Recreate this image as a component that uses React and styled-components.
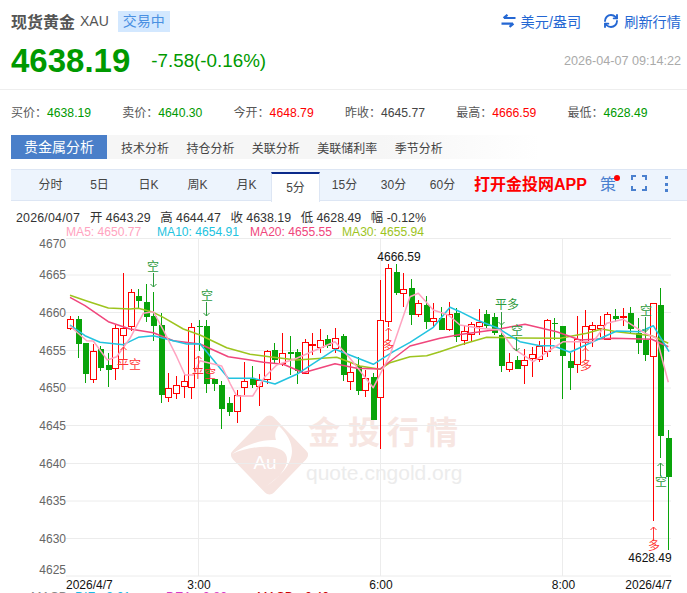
import React from 'react';
import styled, { createGlobalStyle } from 'styled-components';
import { RefreshCw } from 'lucide-react';

const GlobalStyle = createGlobalStyle`
  html, body {
    margin: 0;
    padding: 0;
    width: 687px;
    height: 593px;
    overflow: hidden;
    background: #fff;
    font-family: "Liberation Sans", "Noto Sans CJK SC", sans-serif;
  }
`;

const Page = styled.div`
  width: 687px;
  height: 593px;
  overflow: hidden;
`;

const TopRow = styled.div`
  height: 44px;
  box-sizing: border-box;
  display: flex;
  align-items: center;
  padding: 0 6px 2px 11px;
`;

const Name = styled.span`
  font-size: 16px;
  font-weight: 700;
  color: #555;
`;

const Code = styled.span`
  font-size: 14px;
  color: #555;
  margin-left: 5px;
`;

const Badge = styled.span`
  font-size: 14px;
  line-height: 21px;
  padding: 0 5px;
  margin-left: 9px;
  color: #4a90e2;
  background: #d3e8ff;
`;

const Actions = styled.div`
  margin-left: auto;
  display: flex;
  gap: 22px;
`;

const Action = styled.span`
  display: flex;
  align-items: center;
  gap: 5px;
  font-size: 14.2px;
  color: #2467d3;
`;

const PriceRow = styled.div`
  height: 46px;
  display: flex;
  align-items: center;
  padding: 0 6px 12px 11px;
  box-sizing: border-box;
  border-bottom: 1px solid #eee;
`;

const Price = styled.span`
  font-size: 33px;
  font-weight: 700;
  color: #090;
`;

const Change = styled.span`
  font-size: 18.8px;
  color: #090;
  margin-left: 21px;
`;

const Stamp = styled.span`
  margin-left: auto;
  font-size: 12.6px;
  color: #aaa;
`;

const Stats = styled.div`
  height: 45px;
  box-sizing: border-box;
  display: grid;
  grid-template-columns: repeat(6, 111.3px);
  align-items: center;
  padding: 0 0 2px 11px;
`;

const Stat = styled.span`
  font-size: 12px;
  color: #555;
  white-space: nowrap;
`;

const StatValue = styled.span`
  color: ${props => props.color};
  font-size: 12.2px;
`;

const Tabs = styled.div`
  height: 24px;
  margin-left: 11px;
  width: 529px;
  display: flex;
  align-items: center;
  gap: 17.4px;
  background: linear-gradient(to right, #f6f6f6 70%, #fff);
`;

const MainTab = styled.span`
  width: 96px;
  height: 24px;
  line-height: 24px;
  text-align: center;
  font-size: 14px;
  color: #fff;
  background: #4a7fc9;
  margin-right: -3.4px;
`;

const Tab = styled.span`
  font-size: 12px;
  color: #444;
`;

const Periods = styled.div`
  height: 32px;
  margin: 10px 0 0 11px;
  box-sizing: border-box;
  display: flex;
  padding: 2px 0 0 15px;
  background: #edf4fd;
  border-top: 1px solid #dde6f4;
  border-bottom: 1px solid #dde6f4;
  position: relative;
`;

const Period = styled.span`
  width: 49px;
  box-sizing: border-box;
  text-align: center;
  font-size: 12px;
  line-height: 26px;
  color: #444;
  ${props => props.active && `
    background: #fff;
    border-top: 2px solid #0b2a8a;
    border-left: 1px solid #dde6f4;
    border-right: 1px solid #dde6f4;
    line-height: 28px;
    height: 30px;
  `}
`;

const AppLink = styled.span`
  font-size: 16px;
  font-weight: 700;
  line-height: 26px;
  color: #f00;
  margin-left: 7px;
  white-space: nowrap;
`;

const Strategy = styled.span`
  font-size: 16px;
  line-height: 26px;
  color: #4a80cf;
  margin-left: 13px;
  position: relative;
`;

const RedDot = styled.i`
  position: absolute;
  top: 3px;
  right: -4px;
  width: 6px;
  height: 6px;
  border-radius: 50%;
  background: #f00;
`;

const FullScreen = styled.svg`
  margin: 3px 0 0 15px;
`;

const MoreDots = styled.div`
  margin: 4px 0 0 18px;
  display: flex;
  flex-direction: column;
  gap: 3.5px;
`;

const MoreDot = styled.i`
  width: 3px;
  height: 3px;
  background: #4a80cf;
`;

const InfoRow = styled.div`
  height: 25px;
  padding: 4px 0 0 16px;
  box-sizing: border-box;
  display: flex;
  align-items: flex-end;
  gap: 9.6px;
  font-size: 12.4px;
  line-height: 16px;
  color: #333;
  white-space: nowrap;
`;

const InfoDate = styled.span`
  width: 64.4px;
  letter-spacing: 0.2px;
`;

const MaRow = styled.div`
  height: 12px;
  padding-left: 66px;
  display: grid;
  grid-template-columns: 91px 93px 92px auto;
  font-size: 12.1px;
  line-height: 12px;
`;

const MaValue = styled.span`
  color: ${props => props.color};
`;

const ChartSvg = styled.svg`
  display: block;
`;

const GridLine = styled.line`
  stroke: #ececec;
  stroke-width: 1;
`;

const AxisText = styled.text`
  font-size: 12px;
  fill: #666;
  text-anchor: end;
`;

const DateText = styled.text`
  font-size: 12px;
  fill: #111;
  text-anchor: ${props => props.anchor};
`;

const Curve = styled.polyline`
  fill: none;
  stroke: ${props => props.color};
  stroke-width: 1.5;
  stroke-linejoin: round;
`;

const MarkText = styled.text`
  font-size: 12px;
  text-anchor: middle;
  fill: ${props => (props.red ? '#f33' : '#2c9a3c')};
`;

const MarkArrow = styled.path`
  fill: none;
  stroke: ${props => (props.red ? '#f33' : '#2c9a3c')};
  stroke-width: 1;
`;

const WaterMark = styled.text`
  font-size: 32px;
  font-weight: 700;
  fill: #f7e6e2;
  text-anchor: middle;
`;

const WaterUrl = styled.text`
  font-size: 21px;
  fill: #ececec;
`;

const WaterAu = styled.text`
  font-size: 19px;
  fill: #fff;
  text-anchor: middle;
`;

const MacdRow = styled.div`
  display: flex;
  font-size: 12.5px;
  line-height: 14px;
  padding-left: 31px;
`;

const MacdItem = styled.span`
  color: ${props => props.color};
  width: ${props => props.w}px;
  white-space: nowrap;
`;

const GREEN = '#09a40a';
const RED = '#f00';

const stats = [
  ['买价：', '4638.19', '#090'],
  ['卖价：', '4640.30', '#090'],
  ['今开：', '4648.79', '#f00'],
  ['昨收：', '4645.77', '#444'],
  ['最高：', '4666.59', '#f00'],
  ['最低：', '4628.49', '#090'],
];

const tabs = ['技术分析', '持仓分析', '关联分析', '美联储利率', '季节分析'];
const periods = ['分时', '5日', '日K', '周K', '月K', '5分', '15分', '30分', '60分'];
const quote = ['开 4643.29', '高 4644.47', '收 4638.19', '低 4628.49', '幅 -0.12%'];

// [wick top, body top, body bottom, wick bottom, colour], in page pixels
const candles = [
  [316, 319, 328, 330, 'r'], [316, 319, 344, 358, 'g'], [343, 343, 374, 383, 'g'], [344, 351, 379, 383, 'r'],
  [346, 349, 368, 371, 'g'], [353, 365, 370, 387, 'g'], [325, 328, 368, 380, 'r'], [273, 328, 335, 350, 'r'],
  [289, 292, 326, 331, 'r'], [289, 296, 301, 309, 'g'], [284, 302, 317, 322, 'g'], [292, 316, 326, 341, 'g'],
  [313, 325, 395, 403, 'g'], [373, 388, 397, 402, 'r'], [376, 385, 393, 399, 'r'], [375, 381, 386, 398, 'r'],
  [323, 327, 387, 399, 'r'], [320, 326, 327, 351, 'g'], [320, 326, 384, 393, 'g'], [379, 379, 384, 391, 'g'],
  [381, 385, 409, 429, 'g'], [397, 403, 412, 416, 'g'], [390, 395, 411, 423, 'r'], [362, 381, 387, 395, 'r'],
  [366, 379, 385, 388, 'g'], [374, 380, 386, 406, 'r'], [350, 351, 379, 384, 'r'], [343, 350, 360, 364, 'g'],
  [333, 353, 363, 366, 'r'], [336, 352, 354, 375, 'g'], [349, 352, 371, 384, 'g'], [339, 342, 373, 374, 'r'],
  [333, 344, 345, 355, 'r'], [329, 340, 347, 353, 'r'], [335, 339, 346, 348, 'g'], [328, 338, 348, 353, 'r'],
  [334, 336, 375, 381, 'g'], [363, 372, 381, 390, 'r'], [357, 366, 391, 395, 'g'], [370, 378, 390, 397, 'r'],
  [373, 377, 420, 420, 'g'], [280, 320, 397, 449, 'r'], [264, 268, 321, 327, 'r'], [264, 272, 293, 295, 'g'],
  [273, 289, 293, 307, 'r'], [279, 288, 315, 325, 'g'], [300, 303, 314, 317, 'r'], [296, 305, 322, 329, 'g'],
  [303, 318, 321, 327, 'r'], [307, 318, 330, 330, 'g'], [302, 314, 329, 331, 'r'], [308, 313, 337, 342, 'g'],
  [325, 331, 340, 345, 'r'], [322, 324, 334, 341, 'r'], [309, 322, 326, 335, 'r'], [310, 314, 326, 328, 'g'],
  [313, 317, 333, 335, 'g'], [323, 335, 366, 372, 'g'], [353, 362, 369, 372, 'r'], [356, 360, 369, 369, 'g'],
  [349, 360, 365, 384, 'r'], [347, 354, 358, 377, 'r'], [341, 346, 359, 362, 'r'], [319, 320, 351, 357, 'r'],
  [318, 323, 324, 340, 'g'], [326, 326, 356, 399, 'g'], [353, 361, 368, 390, 'g'], [316, 339, 364, 373, 'r'],
  [310, 326, 342, 352, 'r'], [322, 325, 329, 347, 'r'], [316, 325, 328, 337, 'r'], [312, 314, 339, 339, 'r'],
  [309, 316, 319, 322, 'g'], [308, 316, 317, 326, 'r'], [307, 313, 329, 333, 'g'], [318, 333, 343, 354, 'g'],
  [323, 340, 355, 361, 'g'], [303, 303, 356, 521, 'r'], [288, 305, 436, 458, 'g'], [430, 438, 477, 550, 'g'],
];

const ma5 = '70,326 86.7,340.7 93.3,341 107.3,360 116.7,356.7 130,338.3 143.3,313.3 153.3,311.7 163.3,330 176.7,356.7 185,375 193.3,375 200,360.7 221.7,366 230,383.3 236.7,396 252.7,396 265,376.7 276.7,365 296.7,358.3 335,341.7 350,358.3 373.3,387.7 390,355 410,296.7 418.3,293.3 433.3,310 448.3,315 460,325 480,328.3 500,330 513.3,348.3 533.3,361.7 550,350 563.3,341.7 593.3,341.7 606.7,323.3 623.3,319.3 645,333.3 656.7,338.3 668.3,382.3';
const ma10 = '70,325 85,335.7 100,342.3 123.3,344.7 138.3,337.3 153.3,335.7 173.3,340.7 186.7,344 200,343.7 228.3,378.3 253.3,378.3 275,384 296.7,374.3 335,349.3 373.3,364.3 393.3,351.7 410,342.3 433.3,327.3 450,307.3 460,311.7 476.7,320 498.3,328.3 520,341.7 540,345.7 553.3,345.7 570,352.3 596.7,340 616.7,331 640,331.7 653.3,325.7 669,351.7';
const ma20 = '70,297.3 85,305.7 108.3,321.7 130,329 153.3,332.7 173.3,340.7 200,344 228.3,356.7 250,360 263.3,362.3 283.3,364.3 303.3,372.7 335,363.7 356.7,368.3 380,369 410,346 440,338.3 460,334.6 493.3,330 525,324.3 556.7,331.7 580,340 613.3,338.3 651.7,339.3 668.3,346.7';
const ma30 = '70,295.3 86.7,301 108.3,308 130,309 138.3,308.3 153.3,312.3 163.3,317.3 183.3,329 200,335 226.7,347.7 250,354.3 273.3,357.3 296.7,360 336.7,357.3 360,366 380,369.3 390,362.7 410,356.7 426.7,355.7 440,351.7 460,345 486.7,337.3 516.7,338 560,338.3 586.7,333.3 601.7,329 616.7,331.7 651.7,335.7 668.3,343.3';

const hLines = [275, 312.5, 350.5, 388, 425.5, 463.5, 501, 538.5, 576];
const axisLabels = [
  [4670, 248], [4665, 279], [4660, 316.5], [4655, 354.5], [4650, 392], [4645, 430],
  [4640, 467.5], [4635, 505], [4630, 542.5], [4625, 574],
];
const vLines = [198.5, 380.5, 562.5];

// buy/sell markers: text, text x, text y, arrow x, arrow from/to y, red, arrow points up
const marks = [
  ['空', 153, 271, 153.5, 273, 287, false, false],
  ['空', 207, 300, 206.5, 302, 316, false, false],
  ['平空', 129, 368.5, 123.5, 347, 360, true, true],
  ['平空', 204, 377.5, 198.5, 356, 368, true, true],
  ['多', 388, 349.5, 388.5, 328, 341, true, true],
  ['平多', 507, 309, 501.5, 312, 325, false, false],
  ['空', 517, 335, 516.5, 337, 351, false, false],
  ['多', 586, 370, 585.5, 348, 361, true, true],
  ['空', 646, 315, 645.5, 317, 332, false, false],
  ['空', 661, 485.5, 660.5, 463, 476, false, true],
  ['多', 654, 549.5, 653.5, 527, 540, true, true],
];

const ArrowsIcon = () => (
  <svg width="15" height="14" viewBox="0 0 15 14">
    <path d="M14.5 4H3M6.5 .8L2.5 4" fill="none" stroke="#2467d3" strokeWidth="2.2" />
    <path d="M.5 9.6H12M8.5 12.8L12.5 9.6" fill="none" stroke="#2467d3" strokeWidth="2.2" />
  </svg>
);

const Candle = ({ index, data }) => {
  const [wickTop, bodyTop, bodyBot, wickBot, kind] = data;
  const x = Math.round(70 + index * 7.57) + 0.5;
  const color = kind === 'r' ? RED : GREEN;
  return (
    <g shapeRendering="crispEdges">
      <line x1={x} x2={x} y1={wickTop} y2={wickBot} stroke={color} />
      {kind === 'r' ? (
        <rect x={x - 3} y={bodyTop + 0.5} width={6} height={Math.max(bodyBot - bodyTop, 1)} fill="#fff" stroke={color} />
      ) : (
        <rect x={x - 3} y={bodyTop} width={6} height={Math.max(bodyBot - bodyTop, 1)} fill={color} />
      )}
    </g>
  );
};

const Mark = ({ text, tx, ty, ax, from, to, red, pointUp }) => (
  <g>
    <MarkText red={red} x={tx} y={ty}>{text}</MarkText>
    {pointUp ? (
      <MarkArrow red={red} d={`M${ax} ${from}V${to}M${ax - 3} ${from + 3}L${ax} ${from}L${ax + 3} ${from + 3}`} />
    ) : (
      <MarkArrow red={red} d={`M${ax} ${from}V${to}M${ax - 3} ${to - 3}L${ax} ${to}L${ax + 3} ${to - 3}`} />
    )}
  </g>
);

const Chart = () => (
  <ChartSvg width="687" height="352" viewBox="0 238 687 352">
    <path
      d="M265 417.5a6 6 0 0 1 9 0l32 33a6 6 0 0 1 0 9l-32 33a6 6 0 0 1-9 0l-32-33a6 6 0 0 1 0-9z"
      fill="#f6e3df"
    />
    <path d="M232 454C245 445 262 439 276 440C274 434 276 429 279 426C295 442 302 462 265 487C286 474 292 458 283 451C274 444 250 446 232 454z" fill="#fff" />
    <WaterAu x="265" y="469">Au</WaterAu>
    <WaterMark x="324" y="444">金</WaterMark>
    <WaterMark x="364" y="444">投</WaterMark>
    <WaterMark x="403" y="444">行</WaterMark>
    <WaterMark x="442" y="444">情</WaterMark>
    <WaterUrl x="306" y="480">quote.cngold.org</WaterUrl>

    <GridLine x1="66" x2="671" y1="238.5" y2="238.5" />
    {hLines.map(y => <GridLine key={y} x1="66" x2="671" y1={y} y2={y} />)}
    {vLines.map(x => <GridLine key={x} x1={x} x2={x} y1="238" y2="576" />)}
    {axisLabels.map(([label, y]) => <AxisText key={label} x="66" y={y}>{label}</AxisText>)}

    {candles.map((data, i) => <Candle key={i} index={i} data={data} />)}

    <Curve color="#9dc41e" points={ma30} />
    <Curve color="#f0467c" points={ma20} />
    <Curve color="#22c3e0" points={ma10} />
    <Curve color="#ffa3c0" points={ma5} />

    {marks.map(([text, tx, ty, ax, from, to, red, pointUp], i) => (
      <Mark key={i} text={text} tx={tx} ty={ty} ax={ax} from={from} to={to} red={red} pointUp={pointUp} />
    ))}

    <DateText anchor="middle" x="399" y="261">4666.59</DateText>
    <DateText anchor="middle" x="650" y="562">4628.49</DateText>
    <DateText anchor="start" x="66" y="588.5">2026/4/7</DateText>
    <DateText anchor="middle" x="199" y="588.5">3:00</DateText>
    <DateText anchor="middle" x="381" y="588.5">6:00</DateText>
    <DateText anchor="middle" x="563.5" y="588.5">8:00</DateText>
    <DateText anchor="end" x="672" y="588.5">2026/4/7</DateText>
  </ChartSvg>
);

const App = () => (
  <Page>
    <GlobalStyle />
    <TopRow>
      <Name>现货黄金</Name>
      <Code>XAU</Code>
      <Badge>交易中</Badge>
      <Actions>
        <Action><ArrowsIcon />美元/盎司</Action>
        <Action><RefreshCw size={16} strokeWidth={2.8} />刷新行情</Action>
      </Actions>
    </TopRow>
    <PriceRow>
      <Price>4638.19</Price>
      <Change>-7.58(-0.16%)</Change>
      <Stamp>2026-04-07 09:14:22</Stamp>
    </PriceRow>
    <Stats>
      {stats.map(([label, value, color]) => (
        <Stat key={label}>{label}<StatValue color={color}>{value}</StatValue></Stat>
      ))}
    </Stats>
    <Tabs>
      <MainTab>贵金属分析</MainTab>
      {tabs.map(t => <Tab key={t}>{t}</Tab>)}
    </Tabs>
    <Periods>
      {periods.map(p => <Period key={p} active={p === '5分'}>{p}</Period>)}
      <AppLink>打开金投网APP</AppLink>
      <Strategy>策<RedDot /></Strategy>
      <FullScreen width="16" height="16" viewBox="0 0 16 16">
        <path d="M1 5V1H5M11 1H15V5M15 11V15H11M5 15H1V11" fill="none" stroke="#4a80cf" strokeWidth="2" />
      </FullScreen>
      <MoreDots><MoreDot /><MoreDot /><MoreDot /></MoreDots>
    </Periods>
    <InfoRow>
      <InfoDate>2026/04/07</InfoDate>
      {quote.map(q => <span key={q}>{q}</span>)}
    </InfoRow>
    <MaRow>
      <MaValue color="#ffa3c0">MA5: 4650.77</MaValue>
      <MaValue color="#22c3e0">MA10: 4654.91</MaValue>
      <MaValue color="#f0467c">MA20: 4655.55</MaValue>
      <MaValue color="#9dc41e">MA30: 4655.94</MaValue>
    </MaRow>
    <Chart />
    <MacdRow>
      <MacdItem color="#888" w={44}>MACD</MacdItem>
      <MacdItem color="#1ab8e8" w={91}>DIF: -3.01</MacdItem>
      <MacdItem color="#d63ac8" w={91}>DEA: -2.80</MacdItem>
      <MacdItem color="#c00" w={100}>MACD: -0.40</MacdItem>
    </MacdRow>
  </Page>
);

export default App;
